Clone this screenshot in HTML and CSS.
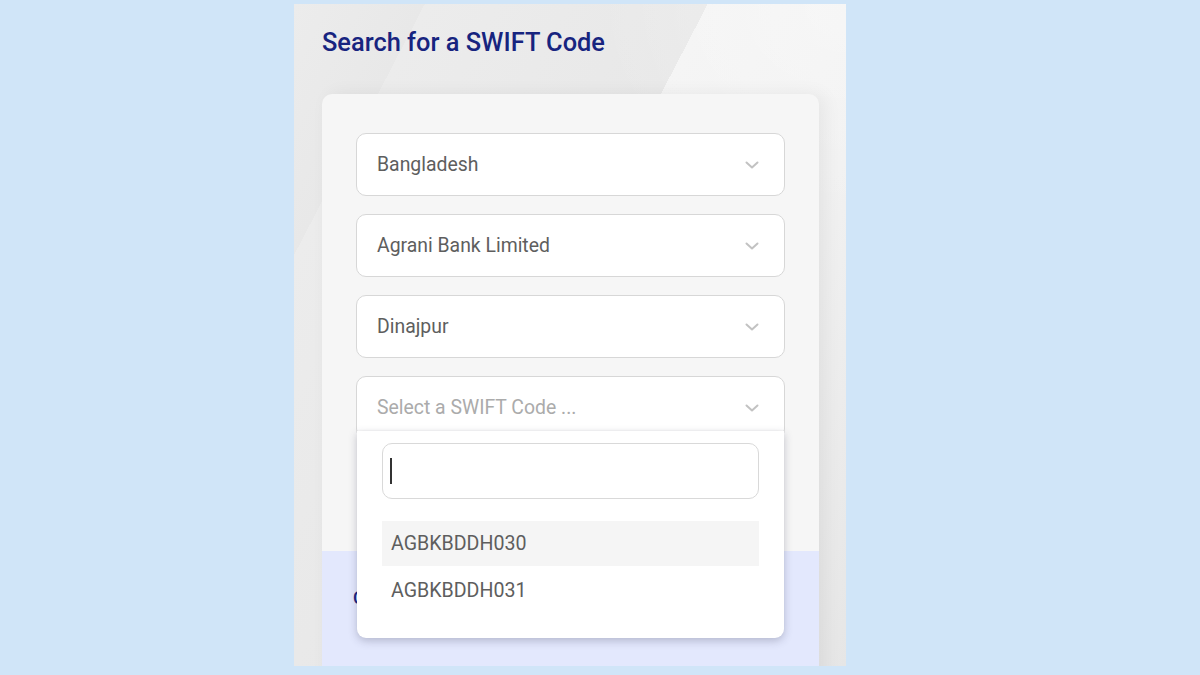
FILE: index.html
```html
<!DOCTYPE html>
<html lang="en">
<head>
<meta charset="utf-8">
<title>Search for a SWIFT Code</title>
<link rel="stylesheet" href="styles.css">
</head>
<body>
<main class="panel">
  <h1 class="title">Search for a SWIFT Code</h1>
  <section class="card">
    <div class="form">
      <div class="select">
        <span class="select-value">Bangladesh</span>
        <svg class="chevron" width="14" height="8" viewBox="0 0 14 8"><polyline points="1.5,1.5 7,6.5 12.5,1.5" fill="none" stroke="#c2c2c2" stroke-width="2" stroke-linecap="round" stroke-linejoin="round"/></svg>
      </div>
      <div class="select">
        <span class="select-value">Agrani Bank Limited</span>
        <svg class="chevron" width="14" height="8" viewBox="0 0 14 8"><polyline points="1.5,1.5 7,6.5 12.5,1.5" fill="none" stroke="#c2c2c2" stroke-width="2" stroke-linecap="round" stroke-linejoin="round"/></svg>
      </div>
      <div class="select">
        <span class="select-value">Dinajpur</span>
        <svg class="chevron" width="14" height="8" viewBox="0 0 14 8"><polyline points="1.5,1.5 7,6.5 12.5,1.5" fill="none" stroke="#c2c2c2" stroke-width="2" stroke-linecap="round" stroke-linejoin="round"/></svg>
      </div>
      <div class="select select-open">
        <span class="select-value placeholder">Select a SWIFT Code ...</span>
        <svg class="chevron" width="14" height="8" viewBox="0 0 14 8"><polyline points="1.5,1.5 7,6.5 12.5,1.5" fill="none" stroke="#c2c2c2" stroke-width="2" stroke-linecap="round" stroke-linejoin="round"/></svg>
        <div class="dropdown">
          <div class="search"><span class="caret"></span></div>
          <ul class="options">
            <li class="option active">AGBKBDDH030</li>
            <li class="option">AGBKBDDH031</li>
          </ul>
        </div>
      </div>
    </div>
    <div class="result">
      <p class="result-text">Copy</p>
    </div>
  </section>
</main>
</body>
</html>
```
FILE: styles.css
```css
* { box-sizing: border-box; }

html, body {
  margin: 0;
  padding: 0;
}

body {
  background: #d0e5f8;
  font-family: Roboto, "Liberation Sans", sans-serif;
  height: 675px;
  overflow: hidden;
  padding: 4px 0 0 294px;
}

.panel {
  width: 552px;
  height: 662px;
  padding: 0 27px 0 28px;
  overflow: hidden;
  background:
    radial-gradient(ellipse 360px 300px at 100% 0%, rgba(255,255,255,0.35), rgba(255,255,255,0) 70%),
    linear-gradient(117.5deg, #ececec 0, #e8e8e8 116px, #ececec 116px, #e8e8e8 367px, #f4f4f4 367px, #f1f1f1 560px, #e6e6e6 795px);
}

.title {
  margin: 0;
  padding-top: 23px;
  font-size: 25.4px;
  line-height: 30px;
  font-weight: 500;
  color: #17247f;
  letter-spacing: 0;
}

.card {
  margin-top: 37px;
  border-radius: 10px 10px 0 0;
  background: #f6f6f6;
  box-shadow: 6px 0 18px rgba(0, 0, 0, 0.06);
}

.form {
  padding: 39px 34px 112px;
  display: flex;
  flex-direction: column;
  gap: 18px;
}

.select {
  position: relative;
  height: 63px;
  background: #fff;
  border: 1px solid #d7d7d7;
  border-radius: 10px;
  padding: 0 25px 0 20px;
  display: flex;
  align-items: center;
  justify-content: space-between;
}

.select-value {
  font-size: 19.4px;
  color: #5e5e5e;
}

.placeholder {
  color: #ababab;
}

.chevron {
  display: block;
  flex: none;
}

.dropdown {
  position: absolute;
  top: 54px;
  left: 0;
  right: 0;
  background: #fff;
  border-radius: 0 0 9px 9px;
  box-shadow: 0 3px 8px rgba(60, 60, 90, 0.28), 0 -1px 2px rgba(0,0,0,0.04);
  padding: 12px 25px 27px 25px;
  z-index: 2;
}

.search {
  height: 56px;
  border: 1px solid #d9d9d9;
  border-radius: 10px;
  display: flex;
  align-items: center;
  padding-left: 7px;
}

.caret {
  display: block;
  width: 2px;
  height: 26px;
  background: #333;
}

.options {
  list-style: none;
  margin: 22px 0 0;
  padding: 0;
}

.option {
  height: 45px;
  display: flex;
  align-items: center;
  padding-left: 9px;
  font-size: 19.6px;
  color: #5e5e5e;
}

.option.active {
  background: #f5f5f5;
}

.option + .option {
  padding-top: 3px;
}

.result {
  background: #e3e8fd;
  height: 160px;
  padding: 36px 31px 0;
}

.result-text {
  margin: 0;
  font-size: 18px;
  font-weight: 500;
  color: #17247f;
}
```
